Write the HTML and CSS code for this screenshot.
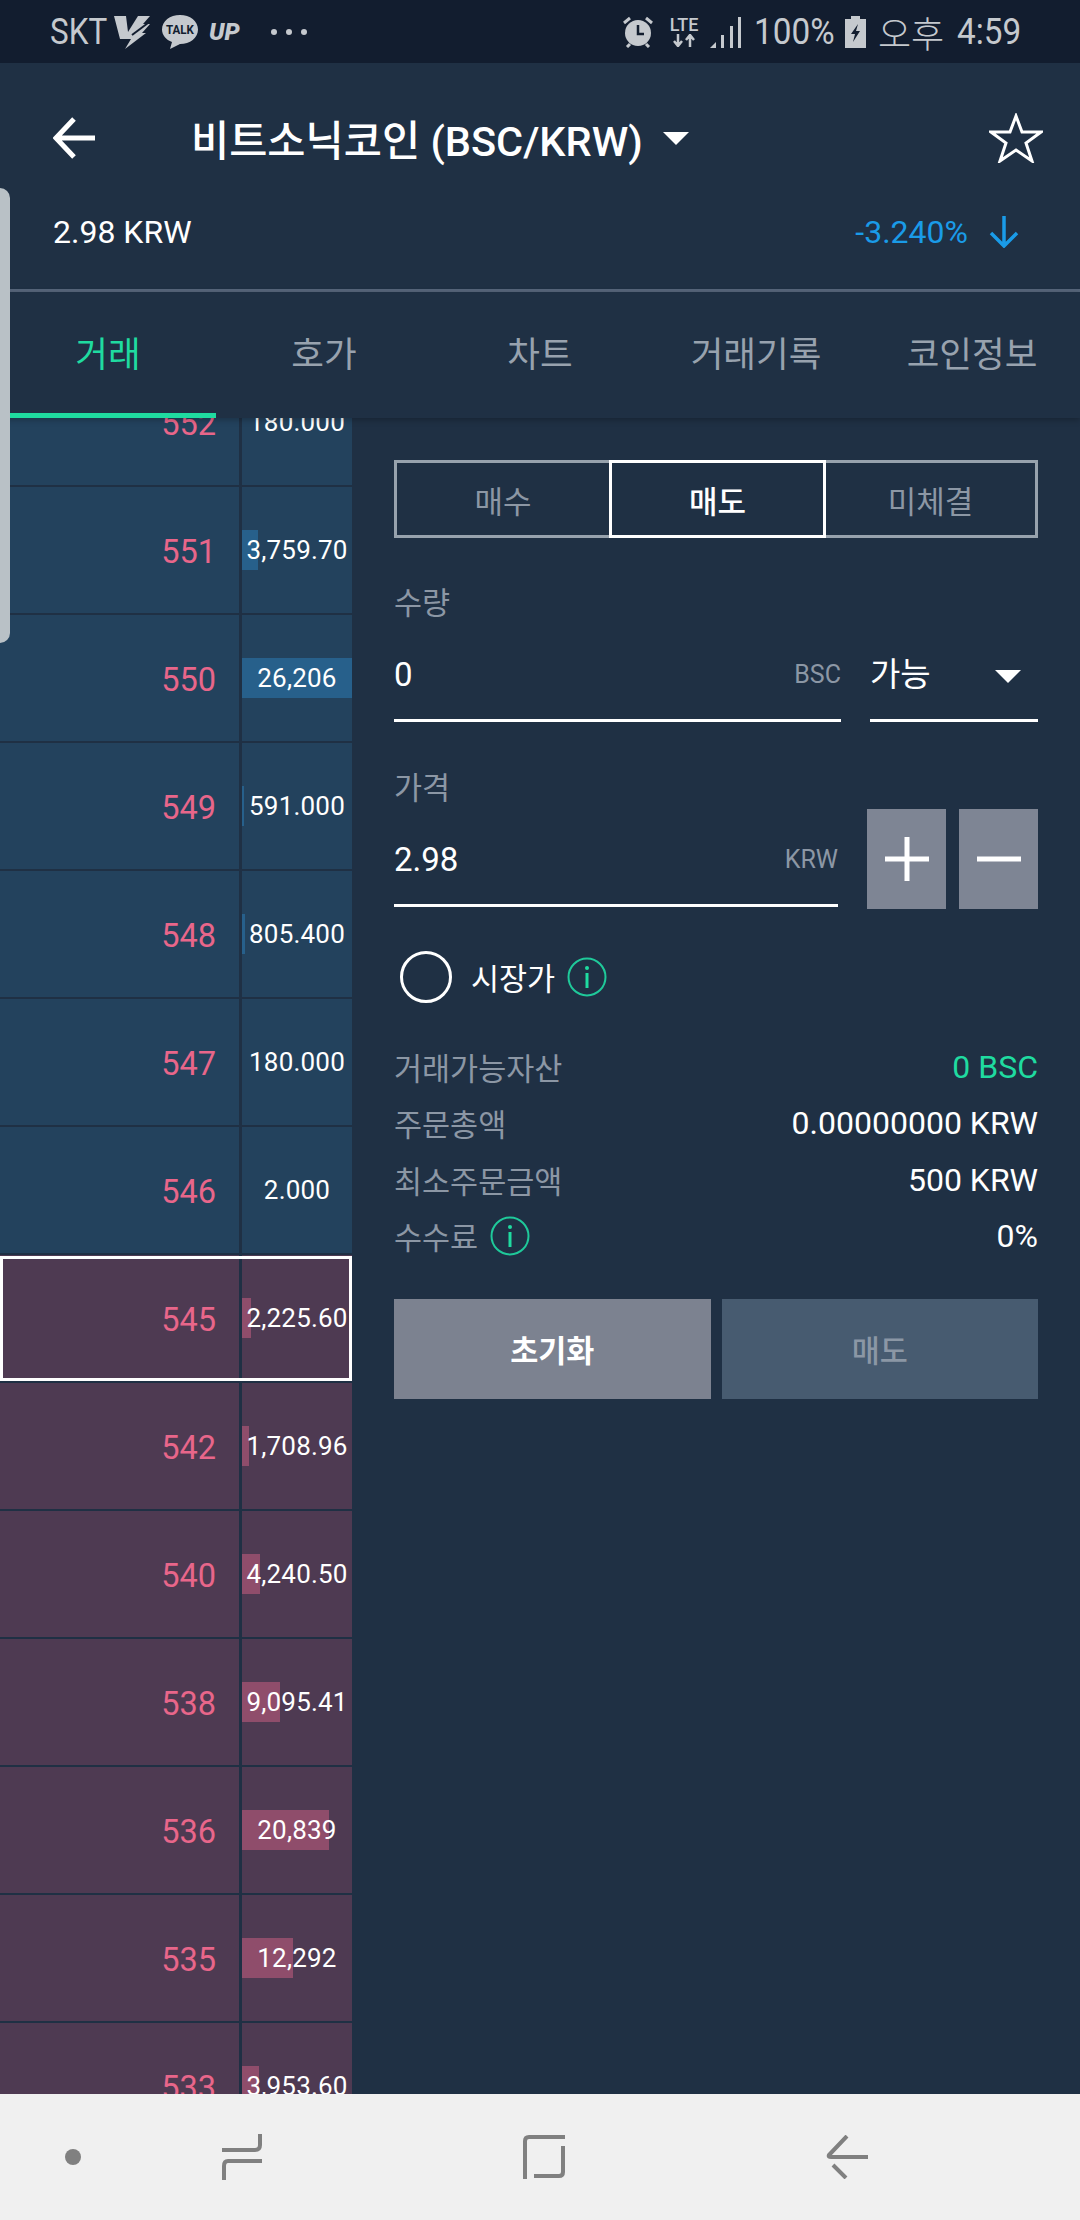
FILE: index.html
```html
<!DOCTYPE html>
<html lang="ko">
<head>
  <meta charset="utf-8">
  <title>비트소닉코인 (BSC/KRW)</title>
  <link rel="stylesheet" href="styles.css">
</head>
<body>
  <div class="status">
    <span class="st-text st-skt">SKT</span>
    <svg class="st-v" width="36" height="34" viewBox="0 0 36 34"><path d="M0 1H12L14 17L24 1H36L29 9H36L28 18H32L11 34L17 24H6Z" fill="#c5c9ce"/><path d="M18 20L34 8" stroke="#121d2f" stroke-width="2"/></svg>
    <svg class="st-talk" width="36" height="34" viewBox="0 0 36 34"><path d="M18 0C28 0 36 6 36 14.500S28 29 18 29L8 34L10 27C4 25 0 20 0 14.500C0 6 8 0 18 0Z" fill="#c5c9ce"/><text x="18" y="19" class="talk-text" text-anchor="middle" textLength="28" lengthAdjust="spacingAndGlyphs">TALK</text></svg>
    <span class="st-up">UP</span>
    <span class="st-dots"><i></i><i></i><i></i></span>
    <span class="st-right">
      <svg width="32" height="32" viewBox="0 0 32 32"><circle cx="16" cy="17" r="13" fill="#c5c9ce"/><path d="M16 9V18H22" stroke="#121d2f" stroke-width="2.500" fill="none"/><path d="M2 7L8 2M30 7L24 2M5 31L8 28M27 31L24 28" stroke="#c5c9ce" stroke-width="3"/></svg>
      <span class="st-lte">
        <span class="lte-text">LTE</span>
        <svg width="26" height="13" viewBox="0 0 26 13"><path d="M7 0V10M3 7L7 12L11 7M19 13V3M15 6L19 1L23 6" stroke="#c5c9ce" stroke-width="2.500" fill="none"/></svg>
      </span>
      <svg class="st-signal" width="32" height="32" viewBox="0 0 32 32"><path d="M0 32L6 26V32Z" fill="#c5c9ce"/><path d="M11 19H14V32H11ZM20 10H23V32H20ZM28 1H31V32H28Z" fill="#c5c9ce"/></svg>
      <span class="st-text st-pct">100%</span>
      <svg class="st-batt" width="21" height="32" viewBox="0 0 21 32"><path d="M6 0H15V3H21V32H0V3H6Z" fill="#c5c9ce"/><path d="M13 8L6 18H10L8 26L15 15H11Z" fill="#121d2f"/></svg>
      <span class="st-ko">오후</span>
      <span class="st-text st-time">4:59</span>
    </span>
  </div>

  <div class="top">
    <div class="title-row">
      <svg class="back" width="42" height="42" viewBox="0 0 42 42"><path d="M21 2L3 21L21 40M3 21H42" stroke="#fff" stroke-width="5" fill="none"/></svg>
      <span class="title">비트소닉코인 (BSC/KRW)</span>
      <span class="caret"></span>
      <svg class="star" width="54" height="50" viewBox="0 0 54 50"><path d="M27 3L33 19H52L37 30L43 48L27 37L11 48L17 30L2 19H21Z" stroke="#fff" stroke-width="3" fill="none"/></svg>
    </div>
    <div class="price-row">
      <span>2.98 KRW</span>
      <span class="change">-3.240%</span>
      <svg class="down" width="32" height="32" viewBox="0 0 32 32"><path d="M16 0V30M3 17L16 30L29 17" stroke="#1a9be8" stroke-width="3.500" fill="none"/></svg>
    </div>
  </div>

  <div class="tabs">
    <div class="tab active">거래</div>
    <div class="tab">호가</div>
    <div class="tab">차트</div>
    <div class="tab">거래기록</div>
    <div class="tab">코인정보</div>
  </div>

  <div class="main">
    <div class="book">
      <div class="rows">
        <div class="row ask"><div class="price">552</div><div class="qty"><span>180.000</span></div></div>
        <div class="row ask"><div class="price">551</div><div class="qty"><b class="bar" style="width:16px"></b><span>3,759.70</span></div></div>
        <div class="row ask"><div class="price">550</div><div class="qty"><b class="bar" style="width:110px"></b><span>26,206</span></div></div>
        <div class="row ask"><div class="price">549</div><div class="qty"><b class="bar" style="width:2px"></b><span>591.000</span></div></div>
        <div class="row ask"><div class="price">548</div><div class="qty"><b class="bar" style="width:3px"></b><span>805.400</span></div></div>
        <div class="row ask"><div class="price">547</div><div class="qty"><span>180.000</span></div></div>
        <div class="row ask"><div class="price">546</div><div class="qty"><span>2.000</span></div></div>
        <div class="row bid current"><div class="price">545</div><div class="qty"><b class="bar" style="width:9px"></b><span>2,225.60</span></div></div>
        <div class="row bid"><div class="price">542</div><div class="qty"><b class="bar" style="width:7px"></b><span>1,708.96</span></div></div>
        <div class="row bid"><div class="price">540</div><div class="qty"><b class="bar" style="width:18px"></b><span>4,240.50</span></div></div>
        <div class="row bid"><div class="price">538</div><div class="qty"><b class="bar" style="width:38px"></b><span>9,095.41</span></div></div>
        <div class="row bid"><div class="price">536</div><div class="qty"><b class="bar" style="width:87px"></b><span>20,839</span></div></div>
        <div class="row bid"><div class="price">535</div><div class="qty"><b class="bar" style="width:51px"></b><span>12,292</span></div></div>
        <div class="row bid"><div class="price">533</div><div class="qty"><b class="bar" style="width:17px"></b><span>3,953.60</span></div></div>
      </div>
    </div>

    <div class="panel">
      <div class="seg">
        <div class="seg-item">매수</div>
        <div class="seg-item on">매도</div>
        <div class="seg-item">미체결</div>
      </div>

      <div class="label first">수량</div>
      <div class="input-row">
        <div class="field field-qty"><span class="value">0</span><span class="unit">BSC</span></div>
        <div class="field field-select"><span class="value">가능</span><span class="caret small"></span></div>
      </div>

      <div class="label second">가격</div>
      <div class="input-row price-input">
        <div class="field field-price"><span class="value">2.98</span><span class="unit">KRW</span></div>
        <div class="step">
          <svg width="44" height="44" viewBox="0 0 44 44"><path d="M22 0V44M0 22H44" stroke="#fff" stroke-width="5"/></svg>
        </div>
        <div class="step">
          <svg width="44" height="44" viewBox="0 0 44 44"><path d="M0 22H44" stroke="#fff" stroke-width="5"/></svg>
        </div>
      </div>

      <div class="market">
        <span class="radio"></span>
        <span>시장가</span>
        <svg class="info" width="40" height="40" viewBox="0 0 40 40"><circle cx="20" cy="20" r="18.500" stroke="#1fc99a" stroke-width="2" fill="none"/><path d="M20 16V31" stroke="#1fdba0" stroke-width="3"/><circle cx="20" cy="11" r="2" fill="#1fdba0"/></svg>
      </div>

      <div class="info-list">
        <div class="info-row"><span class="info-key">거래가능자산</span><span class="green">0 BSC</span></div>
        <div class="info-row"><span class="info-key">주문총액</span><span>0.00000000 KRW</span></div>
        <div class="info-row"><span class="info-key">최소주문금액</span><span>500 KRW</span></div>
        <div class="info-row">
          <span class="info-key">수수료
            <svg class="info" width="40" height="40" viewBox="0 0 40 40"><circle cx="20" cy="20" r="18.500" stroke="#1fc99a" stroke-width="2" fill="none"/><path d="M20 16V31" stroke="#1fdba0" stroke-width="3"/><circle cx="20" cy="11" r="2" fill="#1fdba0"/></svg>
          </span>
          <span>0%</span>
        </div>
      </div>

      <div class="actions">
        <div class="btn reset">초기화</div>
        <div class="btn sell">매도</div>
      </div>
    </div>
  </div>

  <div class="nav">
    <span class="nav-dot"></span>
    <svg class="nav-recent" width="40" height="46" viewBox="0 0 40 46"><path d="M38 0V11Q38 16 33 16H0M40 27H6Q2 27 2 32V46" stroke="#808080" stroke-width="4" fill="none"/></svg>
    <svg class="nav-home" width="42" height="44" viewBox="0 0 42 44"><path d="M42 2H6Q2 2 2 6V44M40 11V37Q40 41 36 41H11" stroke="#808080" stroke-width="4" fill="none"/></svg>
    <svg class="nav-back" width="42" height="44" viewBox="0 0 42 44"><path d="M21 1L3 20Q2 22 5 22H42M7 30L20 43" stroke="#808080" stroke-width="4" fill="none"/></svg>
  </div>

  <div class="handle"></div>
</body>
</html>
```

FILE: styles.css
```css
* { box-sizing: border-box; }
html, body { margin: 0; padding: 0; }
body {
  position: relative;
  width: 1080px;
  height: 2220px;
  overflow: hidden;
  display: flex;
  flex-direction: column;
  background: #1f3044;
  color: #fff;
  font-family: Roboto, "Noto Sans CJK KR", sans-serif;
}

/* status bar */
.status {
  height: 63px;
  flex: none;
  display: flex;
  align-items: center;
  padding-left: 50px;
  background: #121d2f;
  color: #c5c9ce;
}
.st-text { font-size: 37px; transform: scaleX(.9); transform-origin: left center; white-space: nowrap; }
.st-skt { width: 64px; transform: scaleX(.85); }
.st-talk { margin-left: 12px; }
.talk-text { font-size: 13px; font-weight: 700; fill: #121d2f; }
.st-up { margin-left: 11px; width: 40px; font-size: 24px; font-weight: 900; font-style: italic; }
.st-dots { display: flex; gap: 9px; margin-left: 22px; }
.st-dots i { width: 6px; height: 6px; border-radius: 50%; background: #c5c9ce; }
.st-right { display: flex; align-items: center; position: absolute; left: 622px; top: 0; height: 63px; }
.st-lte { display: flex; flex-direction: column; align-items: center; width: 34px; margin-left: 13px; }
.lte-text { font-size: 18px; font-weight: 500; line-height: 18px; }
.st-signal { margin-left: 9px; }
.st-pct { margin-left: 12px; width: 79px; }
.st-batt { margin-left: 12px; }
.st-ko { margin-left: 12px; width: 79px; font-size: 36px; font-weight: 300; }
.st-time { width: 63px; }

/* header */
.top {
  height: 229px;
  flex: none;
  border-bottom: 3px solid #56657a;
}
.title-row { display: flex; align-items: center; height: 62px; margin-top: 44px; padding-left: 53px; }
.title { margin-left: 96px; font-size: 41.500px; font-weight: 500; white-space: nowrap; }
.caret { width: 0; height: 0; margin-left: 20px; border-left: 13px solid transparent; border-right: 13px solid transparent; border-top: 13px solid #fff; }
.star { margin-left: auto; margin-right: 37px; }
.price-row { display: flex; align-items: center; height: 40px; margin-top: 43px; padding-left: 53px; font-size: 32px; }
.change { margin-left: auto; color: #1a9be8; }
.down { margin-left: 20px; margin-right: 60px; }

/* tabs */
.tabs {
  height: 126px;
  flex: none;
  display: flex;
  position: relative;
  z-index: 2;
  background: #1f3044;
  box-shadow: 0 2px 6px rgba(0, 0, 0, .25);
}
.tab {
  width: 216px;
  padding-top: 38px;
  text-align: center;
  font-size: 35.500px;
  line-height: 50px;
  color: #98a2ae;
}
.tab.active { color: #1fdba0; border-bottom: 5px solid #1fdba0; }

/* order book + order form */
.main { flex: 1; display: flex; min-height: 0; }
.book { width: 352px; flex: none; overflow: hidden; }
.rows { margin-top: -59px; }
.row { display: flex; height: 128px; border-bottom: 2px solid #1f3044; position: relative; }
.ask { background: #23425d; }
.bid { background: #4e3a52; }
.current::after { content: ""; position: absolute; left: 0; right: 0; top: 1px; bottom: 0; border: 3px solid #fff; }
.price {
  width: 239px;
  padding-right: 23px;
  text-align: right;
  line-height: 130px;
  font-size: 32.500px;
  color: #e8668a;
}
.qty {
  width: 113px;
  border-left: 3px solid #1f3044;
  position: relative;
  display: flex;
  align-items: center;
  justify-content: center;
  font-size: 26px;
}
.qty span { position: relative; letter-spacing: .2px; }
.bar { position: absolute; left: 0; top: 43px; height: 40px; }
.ask .bar { background: #27608b; }
.bid .bar { background: #8f4d6b; }

.panel { flex: 1; padding: 42px 42px 0; font-size: 32px; }
.seg { display: flex; height: 78px; }
.seg-item {
  width: 218px;
  margin-left: -3px;
  border: 3px solid #97a2ad;
  display: flex;
  align-items: center;
  justify-content: center;
  font-size: 31px;
  color: #8c97a5;
}
.seg-item:first-child { margin-left: 0; }
.seg-item.on { width: 217px; border-color: #fff; color: #fff; font-weight: 500; position: relative; }
.seg-item:last-child { width: 215px; }

.label { font-size: 30.500px; color: #8c97a5; display: flex; align-items: center; }
.label.first { height: 44px; margin-top: 41px; margin-bottom: 3px; }
.label.second { height: 40px; margin-top: 44px; margin-bottom: 3px; }
.input-row { display: flex; gap: 29px; }
.field { display: flex; align-items: flex-start; justify-content: space-between; border-bottom: 3px solid #fff; }
.value { line-height: 50px; margin-top: 24px; font-size: 33px; }
.unit { line-height: 50px; margin-top: 24px; font-size: 25px; color: #8c97a5; }
.field-qty { width: 447px; height: 96px; }
.field-select { width: 168px; height: 96px; padding-right: 17px; }
.caret.small { margin: 44px 0 0; }
.price-input { height: 100px; }
.field-price { width: 444px; height: 98px; }
.field-price .value, .field-price .unit { margin-top: 26px; }
.step { width: 79px; height: 100px; background: #7e8594; display: flex; align-items: center; justify-content: center; }
.step + .step { margin-left: -16px; }

.market { display: flex; align-items: center; height: 52px; margin-top: 42px; padding-left: 6px; font-size: 30.500px; }
.radio { width: 52px; height: 52px; margin-right: 19px; border: 3px solid #fff; border-radius: 50%; }
.market .info { margin-left: 12px; }
.info-list { margin-top: 36px; }
.info-row { display: flex; align-items: center; justify-content: space-between; height: 56.300px; }
.info-key { display: flex; align-items: center; font-size: 30.500px; color: #8c97a5; }
.info-key .info { margin-left: 12px; }
.green { color: #1fdba0; }

.actions { display: flex; gap: 11px; margin-top: 35px; }
.btn { flex: 1; height: 100px; display: flex; align-items: center; justify-content: center; font-size: 30.500px; font-weight: 700; }
.reset { background: #7c8290; color: #fff; }
.sell { background: #475b70; color: #8b97a5; font-weight: 500; }

/* soft keys */
.nav { height: 126px; flex: none; display: flex; align-items: center; padding-left: 65px; background: #f0f0f0; }
.nav-dot { width: 16px; height: 16px; border-radius: 50%; background: #808080; }
.nav-recent { margin-left: 141px; }
.nav-home { margin-left: 261px; }
.nav-back { margin-left: 261px; }

.handle { position: absolute; left: 0; top: 188px; width: 10px; height: 455px; background: #b9c1c6; border-radius: 0 12px 12px 0; z-index: 3; }
```
